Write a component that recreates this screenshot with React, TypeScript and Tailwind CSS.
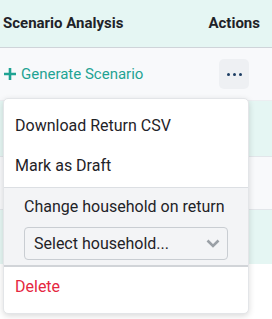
import React from "react";

export default function App() {
  const rowFont = { fontFamily: "Roboto, 'Liberation Sans', sans-serif" };
  const menuFont = { fontFamily: "Roboto, 'Liberation Sans', sans-serif" };
  return (
    <div className="relative w-[272px] h-[319px] overflow-hidden bg-white" style={rowFont}>
      <div className="flex flex-col">
        <div className="h-[48px] flex items-center justify-between bg-[#e5f6f3] border-b border-[#cfd4d9] pl-[3px] pr-[12px]">
          <span className="text-[15px] font-bold text-[#1f2328]">Scenario Analysis</span>
          <span className="text-[15px] font-bold text-[#1f2328]">Actions</span>
        </div>
        <div className="h-[53px] flex items-center justify-between bg-[#f8f9fb] pl-[3px] pr-[23px] border-b border-[#eceef1]">
          <span className="flex items-center gap-[4px] text-[15px] text-[#1fa393]">
            <svg width="14" height="14" viewBox="0 0 14 14">
              <path d="M7 1v12M1 7h12" stroke="#1fa393" strokeWidth="2.6" />
            </svg>
            Generate Scenario
          </span>
          <div className="w-[30px] h-[30px] rounded-[5px] bg-[#eef0f3] flex items-center justify-center gap-[3px]">
            <span className="w-[3px] h-[3px] rounded-full bg-[#1d3d63]" />
            <span className="w-[3px] h-[3px] rounded-full bg-[#1d3d63]" />
            <span className="w-[3px] h-[3px] rounded-full bg-[#1d3d63]" />
          </div>
        </div>
        <div className="h-[56px] bg-[#e5f6f3] border-b border-[#e2e6ea]" />
        <div className="h-[53px] bg-[#f8f9fb] border-b border-[#e2e6ea]" />
        <div className="h-[54px] bg-[#e5f6f3]" />
        <div className="flex-1 bg-white" />
      </div>

      <div
        className="absolute left-[3px] top-[98px] w-[246px] bg-white rounded-[5px] border border-[#e3e5e8] shadow-[0_2px_6px_rgba(0,0,0,0.15)] pt-[7px] pb-[6px] text-[16px] text-[#1f2328]"
        style={menuFont}
      >
        <div className="h-[40px] flex items-center px-[11px]">Download Return CSV</div>
        <div className="h-[40px] flex items-center px-[11px]">Mark as Draft</div>
        <div className="bg-[#f3f4f6] border-t border-[#dcdfe3] border-b-2 border-b-[#d1d4d8] px-[20px] pt-[6px] pb-[5px] mt-[1px]">
          <div className="h-[26px] flex items-center whitespace-nowrap">Change household on return</div>
          <div className="mt-[7px] h-[33px] rounded-[4px] border border-[#c9cdd2] bg-[#f3f4f6] flex items-center justify-between pl-[9px] pr-[7px]">
            <span>Select household...</span>
            <svg width="14" height="9" viewBox="0 0 14 9">
              <path d="M1.5 1.5l5.5 5.5 5.5-5.5" fill="none" stroke="#9aa0a6" strokeWidth="2.6" />
            </svg>
          </div>
        </div>
        <div className="h-[40px] flex items-center px-[11px] text-[#e5283f]">Delete</div>
      </div>
    </div>
  );
}
